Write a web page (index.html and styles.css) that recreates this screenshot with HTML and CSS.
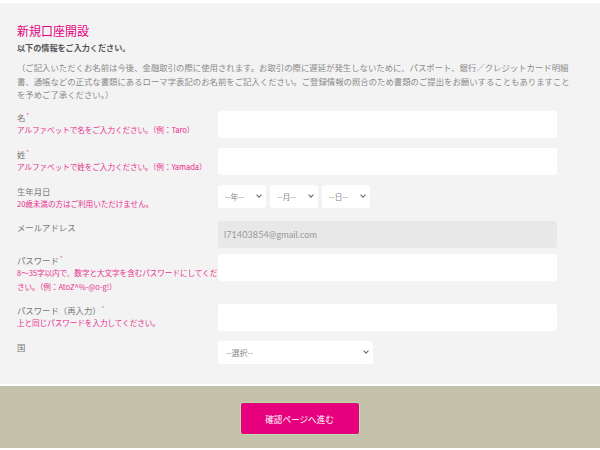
FILE: index.html
```html
<!DOCTYPE html>
<html lang="ja">
<head>
<meta charset="utf-8">
<title>新規口座開設</title>
<link rel="stylesheet" href="styles.css">
</head>
<body>
<div class="page">
  <main class="main">
    <h1 class="title">新規口座開設</h1>
    <p class="lead">以下の情報をご入力ください。</p>
    <p class="note">（ご記入いただくお名前は今後、金融取引の際に使用されます。お取引の際に遅延が発生しないために、パスポート、銀行／クレジットカード明細書、通帳などの正式な書類にあるローマ字表記のお名前をご記入ください。ご登録情報の照合のため書類のご提出をお願いすることもありますことを予めご了承ください。）</p>

    <div class="row">
      <div class="label-col">
        <div class="label">名<span class="req">*</span></div>
        <div class="hint">アルファベットで名をご入力ください。（例：Taro）</div>
      </div>
      <div class="field-col"><div class="input"></div></div>
    </div>

    <div class="row">
      <div class="label-col">
        <div class="label">姓<span class="req">*</span></div>
        <div class="hint">アルファベットで姓をご入力ください。（例：Yamada）</div>
      </div>
      <div class="field-col"><div class="input"></div></div>
    </div>

    <div class="row">
      <div class="label-col">
        <div class="label">生年月日</div>
        <div class="hint">20歳未満の方はご利用いただけません。</div>
      </div>
      <div class="field-col selects">
        <div class="select small"><span>--年--</span><span class="chev"></span></div>
        <div class="select small"><span>--月--</span><span class="chev"></span></div>
        <div class="select small"><span>--日--</span><span class="chev"></span></div>
      </div>
    </div>

    <div class="row row-email">
      <div class="label-col">
        <div class="label">メールアドレス</div>
      </div>
      <div class="field-col"><div class="input disabled">l71403854@gmail.com</div></div>
    </div>

    <div class="row">
      <div class="label-col">
        <div class="label">パスワード<span class="req">*</span></div>
        <div class="hint">8〜35字以内で、数字と大文字を含むパスワードにしてください。（例：AtoZ^%-@o-g!）</div>
      </div>
      <div class="field-col"><div class="input"></div></div>
    </div>

    <div class="row">
      <div class="label-col">
        <div class="label">パスワード（再入力）<span class="req">*</span></div>
        <div class="hint">上と同じパスワードを入力してください。</div>
      </div>
      <div class="field-col"><div class="input"></div></div>
    </div>

    <div class="row row-last">
      <div class="label-col">
        <div class="label">国</div>
      </div>
      <div class="field-col"><div class="select country"><span>--選択--</span><span class="chev"></span></div></div>
    </div>
  </main>
  <footer class="footer">
    <button class="submit" type="button">確認ページへ進む</button>
  </footer>
</div>
</body>
</html>
```
FILE: styles.css
```css
* { box-sizing: border-box; }
html, body { margin: 0; padding: 0; }
body {
  background: #ffffff;
  font-family: "Noto Sans CJK JP", sans-serif;
  width: 600px;
  height: 450px;
  overflow: hidden;
}
.page {
  padding-top: 3px;
}
.main {
  background: #f3f3f3;
  padding: 20px 17px 21px 17px;
  height: 381px;
}
.title {
  margin: 0;
  font-size: 12px;
  line-height: 16px;
  font-weight: normal;
  color: #e4007f;
}
.lead {
  margin: 2px 0 0 0;
  font-size: 8.1px;
  line-height: 14px;
  font-weight: bold;
  color: #555555;
}
.note {
  margin: 6px 0 0 0;
  font-size: 8.4px;
  line-height: 13.5px;
  color: #8a8a8a;
  width: 560px;
}
.row {
  display: grid;
  grid-template-columns: 201px 339px;
  margin-top: 10px;
}
.note + .row { margin-top: 9px; }
.row-email + .row { margin-top: 6px; }
.label {
  font-size: 8.4px;
  line-height: 12px;
  color: #777777;
}
.req {
  color: #e8318f;
  font-size: 5px;
  vertical-align: top;
  margin-left: 1px;
  line-height: 8px;
}
.hint {
  font-size: 7.65px;
  line-height: 14px;
  color: #e8318f;
  letter-spacing: -0.1px;
}
.input {
  height: 27px;
  background: #ffffff;
  border-radius: 3px;
  font-family: "Lato", sans-serif;
  font-size: 9px;
  color: #999999;
  padding-left: 6px;
  display: flex;
  align-items: center;
}
.input.disabled {
  background: #e8e8e8;
  letter-spacing: 0.1px;
}
.selects {
  display: flex;
  gap: 4px;
  align-items: flex-start;
}
.select {
  height: 23px;
  background: #ffffff;
  border-radius: 3px;
  display: flex;
  align-items: center;
  justify-content: space-between;
  padding: 0 5px 0 7px;
  font-size: 8px;
  color: #8a8a8a;
}
.select.small { width: 48px; }
.select.country { width: 155px; padding-left: 8px; }
.chev {
  width: 4px;
  height: 4px;
  border-right: 1.2px solid #666;
  border-bottom: 1.2px solid #666;
  transform: rotate(45deg);
  margin-top: -3px;
}
.footer {
  border-top: 2px solid #ffffff;
  background: #c4c2aa;
  height: 64px;
  display: flex;
  justify-content: center;
  padding-top: 16px;
  padding-right: 1px;
}
.submit {
  width: 120px;
  height: 33px;
  background: #e6007e;
  border: 1px solid #b9dfa9;
  border-radius: 3px;
  color: #ffffff;
  font-family: "Noto Sans CJK JP", sans-serif;
  font-size: 8.6px;
  padding: 0;
}
```
